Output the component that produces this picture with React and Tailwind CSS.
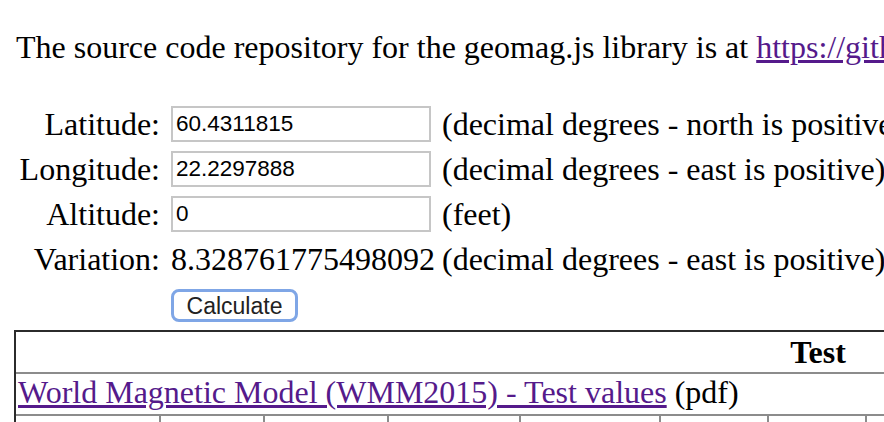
import React from "react";

const serif = { fontFamily: '"Liberation Serif", "Times New Roman", serif' };

function Row({ label, children, desc }) {
  return (
    <>
      <div className="text-right whitespace-nowrap">{label}</div>
      <div className="whitespace-nowrap">{children}</div>
      <div className="whitespace-nowrap">{desc}</div>
    </>
  );
}

function Input({ value }) {
  return (
    <div className="h-[36px] w-[260px] border-2 border-[#c6c6c6] bg-white pl-[3px] flex items-center text-[22.5px] text-black font-['Liberation_Sans',Arial,sans-serif]">
      {value}
    </div>
  );
}

export default function App() {
  const cols = [143, 104, 124, 132, 140, 108, 98, 120, 120, 120, 120, 120, 150];
  return (
    <div
      className="h-screen w-full overflow-hidden bg-white text-black text-[32px] leading-[36px]"
      style={serif}
    >
      <div className="pl-[16px]">
        <p className="mt-[29px] h-[36px] whitespace-nowrap">
          The source code repository for the geomag.js library is at{" "}
          <span className="underline text-[#551a8b]">https://github.com/cmweiss/geomag</span>
        </p>

        <div className="mt-[36px] grid grid-cols-[144px_260px_1fr] gap-x-[11px] grid-rows-[45px_45px_45px_45px_49px] items-center">
          <Row label="Latitude:" desc="(decimal degrees - north is positive)">
            <Input value="60.4311815" />
          </Row>
          <Row label="Longitude:" desc="(decimal degrees - east is positive)">
            <Input value="22.2297888" />
          </Row>
          <Row label="Altitude:" desc="(feet)">
            <Input value="0" />
          </Row>
          <Row label="Variation:" desc="(decimal degrees - east is positive)">
            <span>8.328761775498092</span>
          </Row>
          <div />
          <div>
            <button className="h-[33px] w-[127px] rounded-[8px] border-[3px] border-[#7fa6e6] bg-white text-[23px] leading-[26px] text-[#222] font-['Liberation_Sans',Arial,sans-serif] flex items-center justify-center">
              Calculate
            </button>
          </div>
          <div />
        </div>

        <div className="ml-[-2px] w-[1606px] border-t-2 border-l-2 border-[#2b2b2b]">
          <div className="h-[40px] flex items-center justify-center font-bold">Test</div>
          <div className="h-[2px] bg-[#8c8c8c]" />
          <div className="h-[40px] pl-[2px] whitespace-nowrap">
            <span className="underline text-[#551a8b]">
              World Magnetic Model (WMM2015) - Test values
            </span>{" "}
            (pdf)
          </div>
          <div className="h-[2px] bg-[#8c8c8c]" />
          <div className="flex h-[40px]">
            {cols.map((w, i) => (
              <div
                key={i}
                className={i === 0 ? "h-full shrink-0" : "h-full shrink-0 border-l-2 border-[#8c8c8c]"}
                style={{ width: w }}
              />
            ))}
          </div>
        </div>
      </div>
    </div>
  );
}
